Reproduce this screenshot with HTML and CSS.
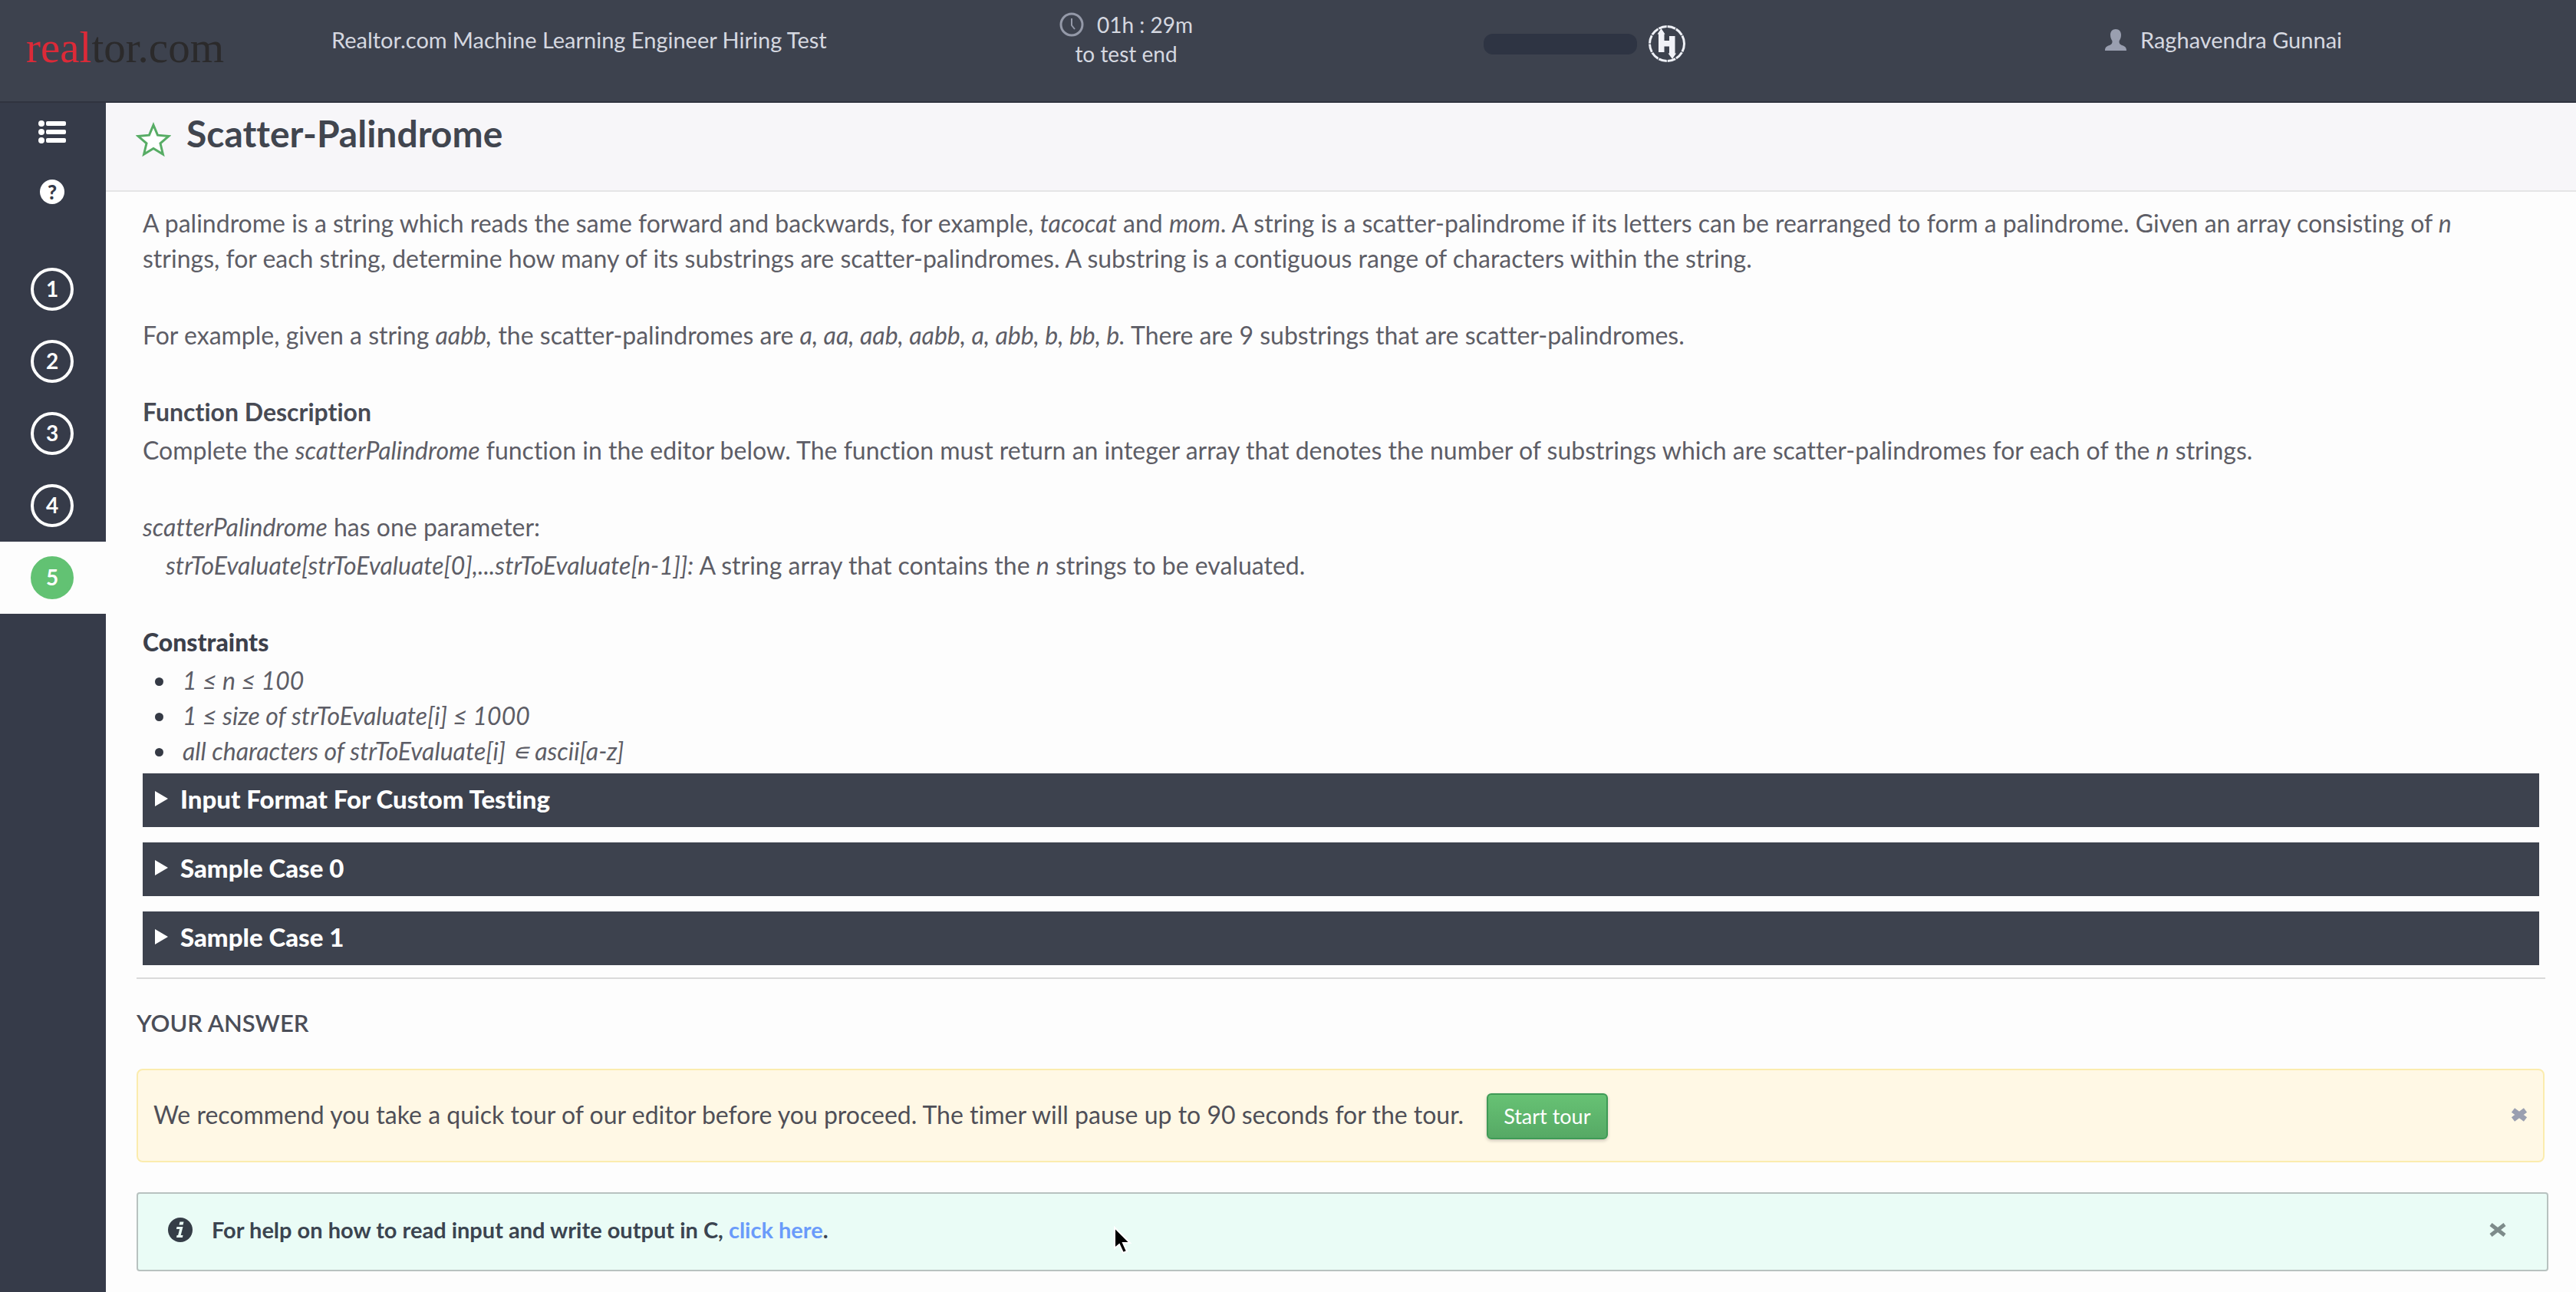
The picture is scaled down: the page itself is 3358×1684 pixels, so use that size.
FILE: index.html
```html
<!DOCTYPE html>
<html lang="en">
<head>
<meta charset="utf-8">
<title>Realtor.com Machine Learning Engineer Hiring Test</title>
<link rel="stylesheet" href="styles.css">
</head>
<body>
<header class="topbar">
  <div class="brand"><span class="brand-red">real</span>tor.com</div>
  <div class="test-name">Realtor.com Machine Learning Engineer Hiring Test</div>
  <div class="timer">
    <div class="timer-left">
      <svg class="clock" viewBox="0 0 32 32" aria-hidden="true"><circle cx="16" cy="16" r="14" fill="none" stroke="currentColor" stroke-width="3"/><path d="M16 8v9l4 5" fill="none" stroke="currentColor" stroke-width="2"/></svg>
      <span>01h : 29m</span>
    </div>
    <div>to test end</div>
  </div>
  <div class="progress">
    <div class="track"></div>
    <svg class="hr-logo" viewBox="0 0 50 50" aria-hidden="true"><circle cx="25" cy="25" r="22.500" fill="none" stroke="#eef0f6" stroke-width="3" stroke-dasharray="10.780 1"/><path d="M12.500 12.500L17.500 5L22.500 12.500H21.500V21H28V15H35.500V37.500H37L32 45L26.500 37.500H28V28.500H21.500V36H14V12.500Z" fill="#f1f2f8"/></svg>
  </div>
  <div class="user">
    <svg class="user-icon" viewBox="0 0 28 28" aria-hidden="true"><path d="M14 0c4.500 0 7 3 7 7.500 0 4-1.500 6-2.500 8 0 3 .5 4 3 5.200 4 1.600 6.500 2.300 6.500 7.300H0c0-5 2.500-5.700 6.500-7.300 2.500-1.200 3-2.200 3-5.200-1-2-2.500-4-2.500-8C7 3 9.500 0 14 0z" fill="currentColor"/></svg>
    <span>Raghavendra Gunnai</span>
  </div>
</header>
<div class="layout">
  <nav class="sidebar" aria-label="Questions">
    <button class="tool" type="button" aria-label="All questions">
      <svg class="list-icon" viewBox="0 0 36 30" aria-hidden="true" fill="currentColor"><circle cx="4" cy="4" r="4"/><circle cx="4" cy="15" r="4"/><circle cx="4" cy="26" r="4"/><rect x="10" y="1" width="26" height="6" rx="2"/><rect x="10" y="12" width="26" height="6" rx="2"/><rect x="10" y="23" width="26" height="6" rx="2"/></svg>
    </button>
    <button class="tool" type="button" aria-label="Help"><span class="help-icon">?</span></button>
    <ol class="questions">
      <li><a class="question" href="#q1"><span class="num">1</span></a></li>
      <li><a class="question" href="#q2"><span class="num">2</span></a></li>
      <li><a class="question" href="#q3"><span class="num">3</span></a></li>
      <li><a class="question" href="#q4"><span class="num">4</span></a></li>
      <li><a class="question current" href="#q5" aria-current="page"><span class="num">5</span></a></li>
    </ol>
  </nav>
  <main class="content">
    <div class="title-bar">
      <svg class="star" viewBox="0 0 46 46" aria-hidden="true"><path d="M23 4l5.500 13.200 14.500 1.200-11 9.400 3.400 14.200L23 34.400 10.600 42 14 27.800 3 18.400l14.500-1.200z" fill="#fff" stroke="#57ac65" stroke-width="3"/></svg>
      <h1 class="title">Scatter-Palindrome</h1>
    </div>
    <section class="problem">
      <p>A palindrome is a string which reads the same forward and backwards, for example, <em>tacocat</em> and <em>mom</em>. A string is a scatter-palindrome if its letters can be rearranged to form a palindrome. Given an array consisting of <em>n</em> strings, for each string, determine how many of its substrings are scatter-palindromes. A substring is a contiguous range of characters within the string.</p>
      <p>For example, given a string <em>aabb,</em> the scatter-palindromes are <em>a, aa, aab, aabb, a, abb, b, bb, b.</em> There are 9 substrings that are scatter-palindromes.</p>
      <h2 class="subhead">Function Description</h2>
      <p>Complete the <em>scatterPalindrome</em> function in the editor below. The function must return an integer array that denotes the number of substrings which are scatter-palindromes for each of the <em>n</em> strings.</p>
      <p class="tight"><em>scatterPalindrome</em> has one parameter:</p>
      <p class="param"><em>strToEvaluate[strToEvaluate[0],...strToEvaluate[n-1]]:</em> A string array that contains the <em>n</em> strings to be evaluated.</p>
      <h2 class="subhead strong">Constraints</h2>
      <ul class="constraints">
        <li><em>1 ≤ n ≤ 100</em></li>
        <li><em>1 ≤ size of strToEvaluate[i] ≤ 1000</em></li>
        <li><em>all characters of strToEvaluate[i] ∊ ascii[a-z]</em></li>
      </ul>
      <div class="cases">
        <details class="case"><summary>Input Format For Custom Testing</summary></details>
        <details class="case"><summary>Sample Case 0</summary></details>
        <details class="case"><summary>Sample Case 1</summary></details>
      </div>
    </section>
    <section class="answer">
      <h2 class="answer-title">YOUR ANSWER</h2>
      <div class="notice tour">
        <span>We recommend you take a quick tour of our editor before you proceed. The timer will pause up to 90 seconds for the tour.</span>
        <button class="start" type="button">Start tour</button>
        <button class="close" type="button" aria-label="Dismiss"><svg viewBox="0 0 22 18" aria-hidden="true"><path d="M3 3l16 12M19 3L3 15" stroke="currentColor" stroke-width="7"/></svg></button>
      </div>
      <div class="notice help">
        <svg class="info" viewBox="0 0 32 32" aria-hidden="true"><circle cx="16" cy="16" r="16" fill="#353d47"/><path d="M15.500 5.500h5l-1 4h-5zM11.500 12h8l-2.800 11h2.800l-.6 3h-7.900l.6-3h1.500l2-8h-4.200z" fill="#eafcf6"/></svg>
        <span>For help on how to read input and write output in C, <a href="#help">click here</a>.</span>
        <button class="close" type="button" aria-label="Dismiss"><svg viewBox="0 0 22 18" aria-hidden="true"><path d="M2 2l18 14M20 2L2 16" stroke="currentColor" stroke-width="5"/></svg></button>
        <svg class="cursor" viewBox="0 0 24 38" aria-hidden="true"><path d="M2 2v27l6-5 5 11 5-2-5-11h9z" fill="#000" stroke="#fff" stroke-width="2"/></svg>
      </div>
    </section>
  </main>
</div>
</body>
</html>
```
FILE: styles.css
```css
* { box-sizing: border-box; }

body {
  margin: 0;
  min-height: 100vh;
  display: flex;
  flex-direction: column;
  background: #fdfdfd;
  color: #5d5d66;
  font-family: Lato, "Liberation Sans", sans-serif;
  font-size: 32px;
  font-variant-ligatures: none;
  line-height: 46px;
}

h1, h2, p, ul, ol { margin: 0; padding: 0; }
button { font: inherit; border: 0; padding: 0; background: none; color: inherit; cursor: pointer; }
svg { display: block; flex: none; }

.topbar {
  display: grid;
  grid-template-columns: 432px 949fr 553fr 810fr 614fr;
  align-items: start;
  height: 134px;
  border-bottom: 2px solid #30333f;
  background: #3d424e;
  color: #d5d8e0;
  font-size: 29px;
}
.brand {
  padding: 30px 0 0 34px;
  font: 57px/64px "Liberation Serif", serif;
  color: #2b2a2b;
}
.brand-red { color: #dc2a38; }
.test-name { padding-top: 29px; }
.timer {
  justify-self: start;
  padding-top: 13px;
  font-size: 28px;
  line-height: 38px;
  text-align: center;
}
.timer-left { display: flex; align-items: center; gap: 17px; }
.clock { width: 32px; height: 32px; color: #9499a8; }
.progress { display: flex; align-items: center; gap: 14px; padding-top: 32px; }
.track { width: 200px; height: 27px; border-radius: 12px; background: #2e3443; }
.hr-logo { width: 50px; height: 50px; }
.user { display: flex; align-items: center; gap: 18px; padding-top: 29px; }
.user-icon { width: 28px; height: 28px; color: #9a9fb0; }

.layout { display: flex; flex: 1; }

.sidebar {
  flex: none;
  width: 138px;
  background: #363b49;
  color: #fff;
}
.tool {
  display: flex;
  width: 100%;
  height: 78px;
  padding: 0 2px 2px 0;
  align-items: center;
  justify-content: center;
}
.list-icon { width: 36px; height: 30px; }
.help-icon {
  width: 32px;
  height: 32px;
  border-radius: 50%;
  background: #fff;
  color: #363b49;
  font-size: 26px;
  font-weight: 900;
  line-height: 32px;
}
.questions { padding-top: 40px; list-style: none; }
.question {
  display: flex;
  height: 94px;
  padding-right: 2px;
  align-items: center;
  justify-content: center;
  color: #fff;
  text-decoration: none;
}
.num {
  width: 56px;
  height: 56px;
  border: 4px solid #fff;
  border-radius: 50%;
  font-size: 28px;
  font-weight: 700;
  line-height: 46px;
  text-align: center;
}
.current { background: #fdfdfd; }
.current .num { border-color: #62c273; background: #62c273; }

.content { flex: 1; min-width: 0; }
.title-bar {
  display: flex;
  align-items: center;
  gap: 20px;
  height: 116px;
  padding: 0 40px 18px 39px;
  border-bottom: 2px solid #e5e5e6;
  background: #f7f6f9;
}
.star { width: 46px; height: 46px; }
.title { padding-bottom: 16px; color: #41454f; font-size: 48px; font-weight: 700; line-height: 56px; }

.problem {
  margin: 0 40px;
  padding: 18px 8px 16px;
  border-bottom: 2px solid #dadada;
}
.problem p { margin-bottom: 54px; padding-right: 24px; }
.problem .tight { margin-bottom: 4px; }
.problem .param { padding-left: 30px; }
.subhead { margin-bottom: 4px; color: #474a54; font-size: 32px; font-weight: 700; line-height: 46px; }
.strong { color: #3c404b; font-weight: 900; }
.constraints { padding-left: 44px; }
.constraints li { padding-left: 8px; }
.constraints li::marker { color: #353a45; }

.cases { display: grid; gap: 20px; margin-top: 6px; }
.case { background: #3d424e; color: #fff; }
.case summary {
  display: flex;
  align-items: center;
  gap: 16px;
  padding: 10px 16px 14px;
  font-size: 33px;
  font-weight: 900;
  list-style: none;
}
.case summary::before {
  content: "";
  border-left: 17px solid #fff;
  border-top: 10px solid transparent;
  border-bottom: 10px solid transparent;
}

.answer { padding: 34px 36px 28px 40px; }
.answer-title { color: #4b4e58; font-size: 31px; font-weight: 600; line-height: 46px; }
.notice { position: relative; display: flex; align-items: center; border: 2px solid; }
.tour {
  height: 122px;
  margin: 37px 5px 0 0;
  padding: 0 20px 2px 20px;
  border-color: #fbecae;
  border-radius: 8px;
  background: #fff8e5;
  color: #4f4f57;
  font-size: 32px;
}
.start {
  height: 60px;
  margin: 4px 0 0 30px;
  padding: 0 20px;
  border: 2px solid #3f9a56;
  border-radius: 6px;
  background: linear-gradient(#67c274, #56a965);
  box-shadow: 0 2px 4px #00000033;
  color: #fff;
  font-size: 27px;
}
.close { margin-left: auto; color: #9a9fb0; }
.close svg { width: 22px; height: 18px; }
.help {
  height: 103px;
  margin-top: 39px;
  padding: 0 53px 6px 39px;
  border-color: #b8c2c0;
  border-radius: 4px;
  background: #eafcf6;
  color: #3b4450;
  font-size: 29px;
  font-weight: 700;
}
.help .close { color: #7d8b8a; }
.help a { color: #6a9bfa; text-decoration: none; }
.info { width: 32px; height: 32px; margin-right: 25px; }
.cursor { position: absolute; top: 42px; left: 1271px; width: 24px; height: 38px; }
```
